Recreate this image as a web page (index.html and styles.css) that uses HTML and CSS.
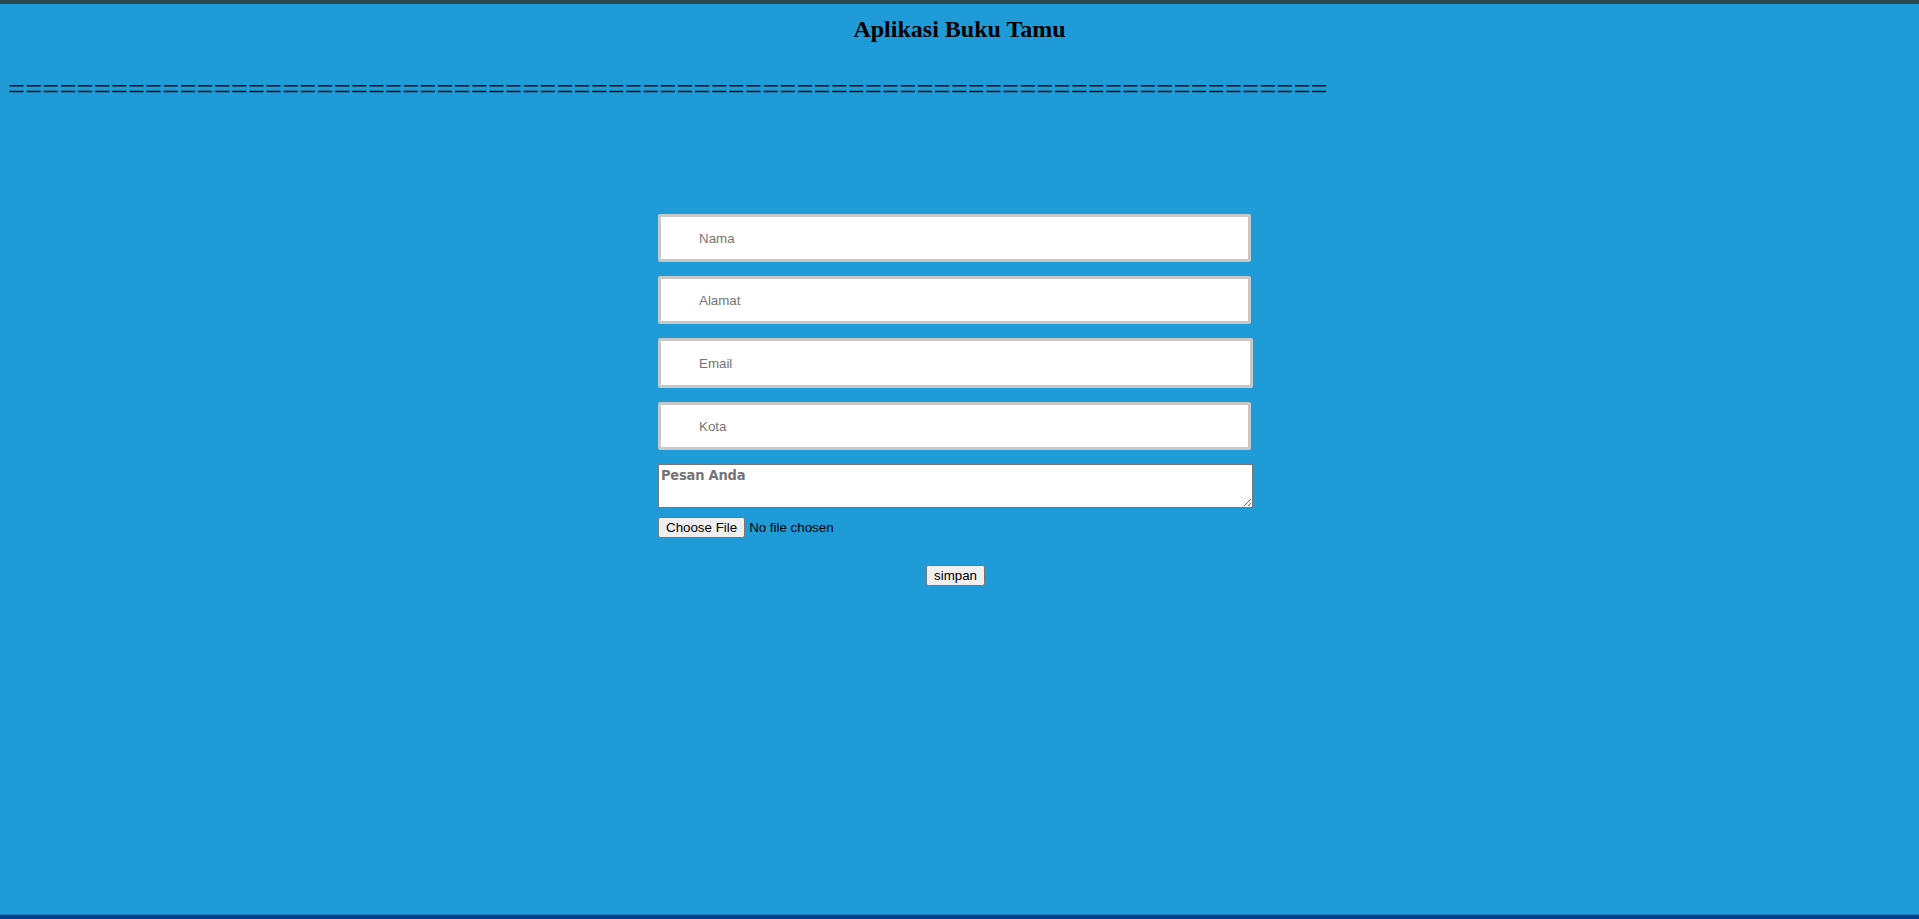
FILE: index.html
```html
<!DOCTYPE html>
<html>
<head>
<meta charset="utf-8">
<title>Aplikasi Buku Tamu</title>
<link rel="stylesheet" href="styles.css">
</head>
<body>
<div class="topbar"></div>
<main class="page">
  <h2 class="title">Aplikasi Buku Tamu</h2>
  <div class="rule">=============================================================================</div>
  <form class="guest-form">
    <input class="field" type="text" placeholder="Nama">
    <input class="field" type="text" placeholder="Alamat">
    <input class="field field-wide" type="text" placeholder="Email">
    <input class="field" type="text" placeholder="Kota">
    <textarea class="message" placeholder="Pesan Anda"></textarea>
    <input class="file" type="file">
    <div class="actions"><button class="btn" type="button">simpan</button></div>
  </form>
</main>
<div class="bottombar"></div>
</body>
</html>
```
FILE: styles.css
```css
html, body {
  margin: 0;
  padding: 0;
  height: 100%;
}
body {
  background: #1f9bd7;
  display: flex;
  flex-direction: column;
  font-family: "Liberation Serif", "Times New Roman", serif;
  overflow: hidden;
}
.topbar {
  height: 4px;
  background: #2c4a4b;
  flex: none;
}
.page {
  flex: 1;
  padding: 0 8px;
}
.title {
  margin: 11px 0 0;
  text-align: center;
  font-size: 24px;
  font-weight: bold;
  color: #000;
  line-height: 28px;
}
.rule {
  margin-top: 29px;
  font-size: 30.4px;
  line-height: 34px;
  color: #111;
  white-space: nowrap;
  letter-spacing: 0;
}
.guest-form {
  margin: 108px 0 0 650px;
  width: 595px;
  display: flex;
  flex-direction: column;
  align-items: flex-start;
}
.field {
  box-sizing: border-box;
  width: 593px;
  height: 48px;
  margin: 0 0 14px;
  border: 3px solid #c8c8c8;
  border-radius: 2px;
  background: #fff;
  padding: 0 0 0 38px;
  font-family: "Liberation Sans", Arial, sans-serif;
  font-size: 13.33px;
  color: #222;
  outline: none;
}
.field-wide {
  width: 595px;
  height: 50px;
}
.field::placeholder {
  color: #757575;
}
.message {
  box-sizing: border-box;
  width: 595px;
  height: 44px;
  margin: 0;
  border: 1px solid #767676;
  border-radius: 0;
  background: #fff;
  padding: 2px;
  font-family: "DejaVu Sans", "Liberation Sans", sans-serif;
  font-stretch: condensed;
  font-weight: bold;
  font-size: 14.5px;
  letter-spacing: -0.2px;
  resize: vertical;
}
.message::placeholder {
  color: #757575;
}
.file {
  margin: 9px 0 0;
  font-family: "Liberation Sans", Arial, sans-serif;
  font-size: 13.33px;
  color: #000;
}
.actions {
  width: 595px;
  display: flex;
  justify-content: center;
  margin-top: 27px;
}
.btn {
  font-family: "Liberation Sans", Arial, sans-serif;
  font-size: 13.33px;
  margin: 0;
}
.bottombar {
  flex: none;
  height: 4px;
  background: #003f8f;
  border-top: 1px solid #1a80c0;
}
```
